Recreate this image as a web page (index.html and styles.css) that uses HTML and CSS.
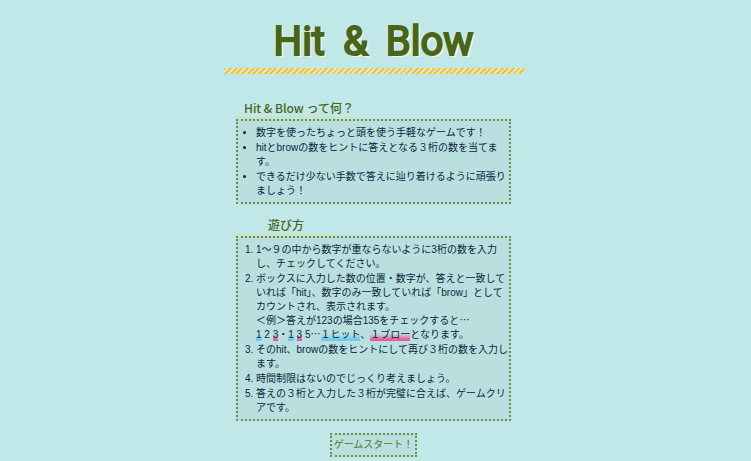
FILE: index.html
```html
<!DOCTYPE html>
<html lang="ja">
<head>
<meta charset="utf-8">
<title>Hit &amp; Blow</title>
<link rel="stylesheet" href="styles.css">
</head>
<body>
<header class="title-block">
  <h1 class="title"><span>Hit</span> <span>&amp;</span> <span>Blow</span></h1>
</header>
<main class="content">
  <section class="section">
    <h2 class="heading">Hit &amp; Blow って何？</h2>
    <div class="panel">
      <ul class="list">
        <li>数字を使ったちょっと頭を使う手軽なゲームです！</li>
        <li>hitとbrowの数をヒントに答えとなる３桁の数を当てま<br>す。</li>
        <li>できるだけ少ない手数で答えに辿り着けるように頑張り<br>ましょう！</li>
      </ul>
    </div>
  </section>
  <section class="section">
    <h2 class="heading heading-wide">遊び方</h2>
    <div class="panel">
      <ol class="list">
        <li>1〜９の中から数字が重ならないように3桁の数を入力<br>し、チェックしてください。</li>
        <li>ボックスに入力した数の位置・数字が、答えと一致して<br>いれば「hit」、数字のみ一致していれば「brow」として<br>カウントされ、表示されます。<br>＜例＞答えが123の場合135をチェックすると<span class="dots">…</span><br><span class="hit">1</span> 2 <span class="blow">3</span>・<span class="hit">1</span> <span class="blow">3</span> 5<span class="dots">…</span><span class="hit">１ヒット</span>、<span class="blow">１ブロー</span>となります。</li>
        <li>そのhit、browの数をヒントにして再び３桁の数を入力し<br>ます。</li>
        <li>時間制限はないのでじっくり考えましょう。</li>
        <li>答えの３桁と入力した３桁が完璧に合えば、ゲームクリ<br>アです。</li>
      </ol>
    </div>
  </section>
  <button class="start" type="button">ゲームスタート！</button>
</main>
</body>
</html>
```
FILE: styles.css
```css
* {
  box-sizing: border-box;
}

body {
  margin: 0;
  padding: 16px 4px 4px 0;
  background: #c0e8e8;
  color: #0a2640;
  font-family: "Liberation Sans", "Noto Sans CJK JP", sans-serif;
  font-size: 10px;
  line-height: 14px;
}

.title-block {
  max-width: 300px;
  margin: 0 auto 25px;
}

.title-block::after {
  content: "";
  display: block;
  height: 6px;
  background: repeating-linear-gradient(135deg, #f6c33c 0 2px, #dce8cc 2px 4px);
}

.title {
  display: flex;
  justify-content: center;
  gap: 18px;
  margin: 0;
  color: #48651c;
  font-family: Roboto, sans-serif;
  font-size: 40px;
  font-weight: 400;
  line-height: 52px;
  -webkit-text-stroke: 2px #48651c;
  text-shadow: 2px 2px 0 #fff3d8, 2px 1px 1px #fff3d8, -2px -1px 1px #d9efe2;
}

.content {
  display: flex;
  flex-direction: column;
  align-items: center;
  max-width: 275px;
  margin: 0 auto;
}

.section {
  width: 100%;
  margin-bottom: 12px;
}

.heading {
  width: fit-content;
  margin: 0 0 1px;
  padding: 0 8px;
  border-bottom: 1px solid #e0dc92;
  color: #48651c;
  font-family: "Noto Sans CJK JP", sans-serif;
  font-size: 12px;
  font-weight: 500;
  line-height: 18px;
}

.heading-wide {
  padding: 0 30px 0 32px;
}

.panel {
  padding: 5px 0 4px;
  border: 2px dotted #6c9048;
  background: #b9e0de;
}

.list {
  margin: 0;
  padding-left: 18px;
  white-space: nowrap;
}

.list li + li {
  margin-top: 1px;
}

.dots {
  font-family: "Noto Sans CJK JP", sans-serif;
  line-height: 1;
}

.hit,
.blow {
  padding-bottom: 1px;
}

.hit {
  background: linear-gradient(transparent 40%, #6cc8f4 90%);
}

.blow {
  background: linear-gradient(transparent 40%, #f0549c 90%);
}

.start {
  padding: 3px 2px;
  border: 2px dotted #6c9048;
  background: #b9e0de;
  color: #587628;
  font: inherit;
}
```
